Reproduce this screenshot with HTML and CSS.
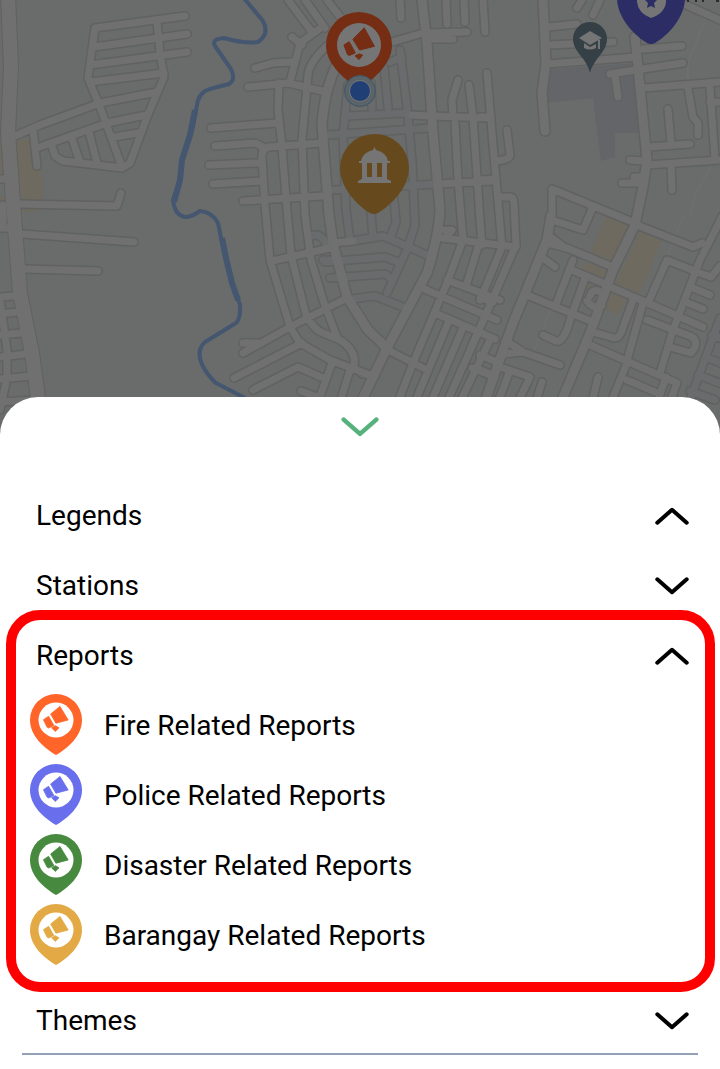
FILE: index.html
```html
<!DOCTYPE html>
<html lang="en">
<head>
<meta charset="utf-8">
<meta name="viewport" content="width=device-width, initial-scale=1">
<title>Map legends</title>
<link rel="stylesheet" href="styles.css">
</head>
<body>
<svg class="symbols" aria-hidden="true">
  <symbol id="report-pin" viewBox="0 0 52 61">
    <path fill="currentColor" d="M26 0A26 26 0 0 1 52 26C52 42 38 54 26 61C14 54 0 42 0 26A26 26 0 0 1 26 0Z"/>
    <circle class="pin-disc" cx="26" cy="26" r="17.5"/>
    <path fill="currentColor" stroke="currentColor" stroke-width=".8" stroke-linejoin="round" d="M30 12.4L38.2 26L25.9 29.2L20.6 20ZM13.4 25.7L18.6 22.3L23.9 31.5L18.7 34L17 33ZM21.6 33.8L25.3 31.7L29 33.8L25.3 37.4Z"/>
  </symbol>
  <symbol id="chevron-down" viewBox="0 0 34 18">
    <path fill="none" stroke="currentColor" stroke-width="4" stroke-linecap="round" stroke-linejoin="round" d="M2.3 2.3L17 15.2L31.7 2.3"/>
  </symbol>
  <symbol id="chevron-up" viewBox="0 0 34 18">
    <path fill="none" stroke="currentColor" stroke-width="4" stroke-linecap="round" stroke-linejoin="round" d="M2.3 15.7L17 2.8L31.7 15.7"/>
  </symbol>
</svg>

<div class="map">
<svg class="map-art" viewBox="0 0 720 440" preserveAspectRatio="xMidYMin slice" role="img" aria-label="Street map">
  <defs>
    <g id="minor">
      <path d="M185 16L95 28L88 78L100 107L122 167M187 34L94 47M187 52L90 65M157 21L160 53L164 77L147 117L130 163L122 168L97 165L63 161L55 156L52 146M164 73L90 82M157 92L100 103L40 125L13 137M146 115L107 123L37 148M138 133L114 137M33 130L37 166M72 139L80 162M89 132L97 163M121 193L117 206L18 204M22 234L134 242M25 269L98 271"/>
      <path d="M0 179H10M0 228L14 228M0 297L14 296M0 314L17 312M0 335L21 333M0 357L26 354M0 379L31 376M0 402L35 400M0 300L7 350L7 378L0 410M3 205V226"/>
      <path d="M288 0L312 32M305 0L325 28M327 0L348 27M322 27L300 43L290 82M328 45Q309 62 308 75L302 140L305 215L311 260L324 303L337 337M292 37L302 45M255 68L273 63L292 62M248 87L288 83L322 91M279 83L278 110L282 147L287 210L291 255L306 315Q314 330 323 333L340 340Q359 352 353 370M211 128L277 123M215 146L255 143L265 148M209 165L258 163M213 184L262 181M243 201L322 196M322 143L269 147Q261 149 262 158L265 205L270 260L290 327L300 343L330 360L370 375M272 261L330 248M243 353L290 327L343 300M243 343H258M234 378L302 343M253 390L298 367L323 378M332 363L318 402M350 370L340 402M301 391L320 398"/>
      <path d="M392 42L423 33L467 32M400 0L401 18M446 0L447 24M464 0L465 22M430 39H453M412 115L430 116L490 118M458 80L452 100L453 115M469 85L473 117L480 220L482 245M455 123L458 180L463 240L447 283L413 363L398 402M437 184L492 181M442 238L516 247M447 236L452 230H444M478 247L467 283M447 280L500 300M422 288L497 320M435 313L495 339M388 350L427 370M448 323L415 402M462 330L431 402M477 335L447 402M490 340L460 402M472 368L490 375M333 243L353 241"/>
      <path d="M483 0L485 32M487 73L492 133L502 247L480 300M480 117L491 117M507 130L510 155Q510 160 495 161M480 180L495 179M500 197L511 197Q514 198 514 204L516 245L490 305L470 350M480 298L493 302M548 27L577 24M550 45L613 42M547 64L637 57M577 8L582 0M593 15L600 0M643 49L682 46M610 74L683 63M615 75L618 97M643 88L720 82M684 4L720 20M668 109L671 144M648 147L690 144M688 88L693 117L698 123V135M710 87L715 160M647 165L720 160M671 165L672 190M630 160L643 161M622 183H643M634 177H643M710 102H720"/>
      <path d="M635 223L552 189V220M552 220L583 230L593 207M547 243L567 248L613 267M552 238L565 248M543 258L555 267M527 295L593 322M573 260L555 307M572 270L603 283M585 278L570 320Q564 343 556 341L543 335M604 295Q597 288 592 292L590 296M587 301Q594 310 602 306M508 342L523 352L560 365M503 354L523 352M500 367L530 377L518 402M480 355L497 362M480 370L490 374M509 373L498 402M542 382L536 402M590 345L677 383L670 402M593 332L614 338Q620 338 622 330L633 300M613 288L680 317L703 327M643 303L628 357M648 303L667 260L697 272M647 320L690 336Q701 341 691 353L670 347M637 225L693 247L702 243M723 215L700 260L673 330L660 373M697 272L711 277L720 266M693 288L710 295M688 303L703 309M598 377L592 402M627 363L611 402M627 380L655 392M666 377L658 400"/>
    </g>
    <g id="faded">
      <path d="M327 135L430 128M348 116L405 113M384 67L388 108M400 50L407 107L412 160L415 225L408 247L387 293M372 108L371 83M333 190L437 184M348 85L343 135L346 210L350 240M370 200L373 238M393 190L396 222L391 236M325 262L385 257L398 262M330 278L385 274L393 280M353 241L383 236L427 255M343 300L375 296L403 307M390 62L402 57M311 236Q322 232 327 246M323 260H330M362 374L375 376M720 318L690 400M712 335L725 340M706 357L725 365M698 375L725 385M690 391L715 400"/>
    </g>
    <g id="major">
      <path d="M338 62Q324 90 322 125L329 215L333 243L347 297L368 330L387 348M422 0L427 43L433 133L440 210Q439 235 427 273L387 348L361 402M543 0L546 63L542 93L545 131M635 37L638 67L647 160L643 187L635 225L613 270L590 333L561 402M551 216L547 240L513 323L497 367L485 402"/>
    </g>
    <path id="highway" d="M8 -5L11 66L8 133L14 215L20 293L32 353L39 405"/>
  </defs>
  <g class="district">
    <path d="M547 70L635 63L638 133H615V157L601 161L593 98L547 103Z"/>
  </g>
  <g class="plaza">
    <path d="M607 215L630 225L613 262L590 253ZM640 230L662 240L640 293L615 285ZM610 293L627 298L618 315L606 310ZM585 262L608 270L605 280L581 270ZM590 283L602 288L598 296L586 291ZM17 141L38 136L44 200L38 212L20 212ZM0 140L5 175L0 176ZM0 195L7 200V212H0Z"/>
  </g>
  <path class="trail" d="M706 18L688 63V80M720 150L695 195L690 215M684 215L668 255M555 300L530 360"/>
  <use href="#faded" class="casing minor-casing"/>
  <use href="#minor" class="casing minor-casing"/>
  <use href="#major" class="casing major-casing"/>
  <use href="#highway" class="casing highway-casing"/>
  <use href="#faded" class="road faded-road"/>
  <use href="#minor" class="road minor-road"/>
  <use href="#major" class="road major-road"/>
  <use href="#highway" class="road highway-road"/>
  <g class="river">
    <path d="M243 -3L263 21Q270 34 258 42Q245 44 224 38Q211 39 215 46L231 69Q236 80 229 84Q212 88 205 91Q198 96 197 105L193 127L182 160L180 180L173 200Q175 217 187 217Q193 216 200 211Q212 212 218 223L223 247L232 283L240 305Q241 318 236 323L205 342Q194 352 205 370Q214 383 218 384L245 398"/>
    <path class="river-wide" d="M195 110L190 135L182 160L180 180L174 202M222 238L226 258L232 283L238 300"/>
  </g>

  <g class="school">
    <path d="M590 73C587 58 573 52 573 39A17 17 0 0 1 607 39C607 52 594 58 590 73Z"/>
    <path class="pin-symbol" d="M590 31L602 38L590 45L579 38ZM584 43L590 47L596 44V48Q590 51 584 48ZM598 40H600V49H598Z"/>
  </g>
  <g class="police">
    <path d="M651 -36A34 34 0 0 1 685 -2C685 18 667 36 655 43Q651 45 647 43C635 36 617 18 617 -2A34 34 0 0 1 651 -36Z"/>
    <path class="pin-symbol" d="M637 -8H666V2Q665 13 651 18Q638 13 637 2Z"/>
    <path d="M651 -5L653 -1L657 0L654 3L655 8L651 6L647 8L648 3L645 0L649 -1Z"/>
  </g>
  <path class="label-edge" d="M687 1H689M695 1H697M702 1H704M716 1H719"/>
  <g class="fire">
    <path d="M359 12A33 33 0 0 1 392 45C392 66 371 80 359 90C347 80 326 66 326 45A33 33 0 0 1 359 12Z"/>
    <circle class="pin-symbol" cx="359" cy="45" r="22"/>
    <path class="megaphone" d="M364.2 27.800L374.400 46.300L359.600 50.100L352.900 39.300ZM343.900 45.100L349.200 41.700L355.300 52.900L349.400 55.400L347.500 54.500ZM355 55.800L359.300 53.900L362.700 55.200L359 59.600Z"/>
  </g>
  <g class="location">
    <circle class="location-halo" cx="360" cy="91" r="15.5"/>
    <circle class="location-dot" cx="360" cy="91" r="10.5"/>
  </g>
  <g class="barangay">
    <path d="M374 134A34 34 0 0 1 409 168C409 188 390 206 378 213Q374 215 370 213C358 206 340 188 340 168A34 34 0 0 1 374 134Z"/>
    <path class="pin-symbol" d="M373 150L374.500 147L376 150Q387 153 388 161H390V163H387V179L391 181V183H358V181L362 179V163H359V161H361Q362 153 373 150ZM367 163V177H372V163ZM377 163V177H382V163Z" fill-rule="evenodd"/>
  </g>
</svg>
</div>

<main class="sheet">
  <button class="handle" type="button" aria-label="Close panel"><svg class="handle-icon"><use href="#chevron-down"/></svg></button>

  <button class="row" type="button" aria-expanded="true">Legends<svg class="chevron"><use href="#chevron-up"/></svg></button>
  <button class="row" type="button" aria-expanded="false">Stations<svg class="chevron"><use href="#chevron-down"/></svg></button>

  <section class="highlight">
    <button class="row row-inset" type="button" aria-expanded="true">Reports<svg class="chevron"><use href="#chevron-up"/></svg></button>
    <ul class="legend">
      <li class="legend-item"><svg class="pin pin-fire"><use href="#report-pin"/></svg>Fire Related Reports</li>
      <li class="legend-item"><svg class="pin pin-police"><use href="#report-pin"/></svg>Police Related Reports</li>
      <li class="legend-item"><svg class="pin pin-disaster"><use href="#report-pin"/></svg>Disaster Related Reports</li>
      <li class="legend-item"><svg class="pin pin-barangay"><use href="#report-pin"/></svg>Barangay Related Reports</li>
    </ul>
  </section>

  <div class="themes">
    <button class="row row-themes" type="button" aria-expanded="false">Themes<svg class="chevron"><use href="#chevron-down"/></svg></button>
  </div>
</main>
</body>
</html>
```

FILE: styles.css
```css
* { box-sizing: border-box; }

body {
  margin: 0;
  background: #fff;
  color: #000;
  font: 28px/36px Roboto, "Liberation Sans", sans-serif;
}

.symbols { position: absolute; width: 0; height: 0; }

/* Map */
.map { height: 440px; background: #696c6a; overflow: hidden; }
.map-art { display: block; width: 100%; height: 100%; }
.district { fill: #646568; }
.plaza { fill: #6e6a60; }
.trail { fill: none; stroke: #6d6e6d; stroke-width: 2; }
.casing, .road { fill: none; stroke-linecap: round; stroke-linejoin: round; }
.casing { stroke: #606261; }
.minor-casing { stroke-width: 10px; }
.major-casing { stroke-width: 12px; }
.highway-casing { stroke-width: 16px; }
.road { stroke: #707070; }
.faded-road { stroke: #696b6c; stroke-width: 7px; }
.minor-road { stroke-width: 7px; }
.major-road { stroke-width: 9px; }
.highway-road { stroke-width: 14px; }
.river { fill: none; stroke: #455671; stroke-width: 4; stroke-linejoin: round; }
.river-wide { stroke-width: 6; }
.pin-symbol { fill: #757575; }
.school { fill: #343f46; }
.police { fill: #2d2d66; }
.fire { fill: #752d13; }
.megaphone { stroke: #752d13; stroke-linejoin: round; }
.barangay { fill: #664a1d; }
.label-edge { stroke: #2b2b2b; stroke-width: 2; }
.location-halo { fill: #5a6468; stroke: #3f5669; stroke-width: 1; }
.location-dot { fill: #1f3f75; stroke: #777; stroke-width: 1; }

/* Bottom sheet */
.sheet {
  position: relative;
  display: flex;
  flex-direction: column;
  margin-top: -43px;
  padding-bottom: 14px;
  background: #fff;
  border-radius: 38px 38px 0 0;
}

button {
  margin: 0;
  border: 0;
  background: none;
  color: inherit;
  font: inherit;
  text-align: left;
  cursor: pointer;
}

.handle {
  display: flex;
  justify-content: center;
  width: 100%;
  height: 83px;
  padding: 20px 0 0;
  color: #56b17c;
}
.handle-icon { width: 38px; height: 20px; }

.row {
  display: flex;
  align-items: center;
  justify-content: space-between;
  width: 100%;
  height: 70px;
  padding: 1px 31px 0 36px;
}
.row-inset { padding: 1px 16px 0 20px; }
.chevron { flex: none; width: 34px; height: 18px; }

.highlight {
  margin: -10px 5px 0 6px;
  padding-bottom: 12px;
  border: 10px solid #f00;
  border-radius: 34px;
}

.legend { margin: 0; padding: 0; list-style: none; }
.legend-item {
  display: flex;
  align-items: center;
  gap: 22px;
  height: 70px;
  padding: 1px 0 0 14px;
}
.pin { flex: none; width: 52px; height: 61px; margin-bottom: 2px; }
.pin-disc { fill: #fff; }
.pin-fire { color: #ff6428; }
.pin-police { color: #686eec; }
.pin-disaster { color: #478a3f; }
.pin-barangay { color: #e2a945; }

.themes {
  margin: 0 22px;
  padding-bottom: 5px;
  border-bottom: 2px solid #94a1b8;
}
.row-themes { height: 56px; padding: 1px 9px 0 14px; }
```
